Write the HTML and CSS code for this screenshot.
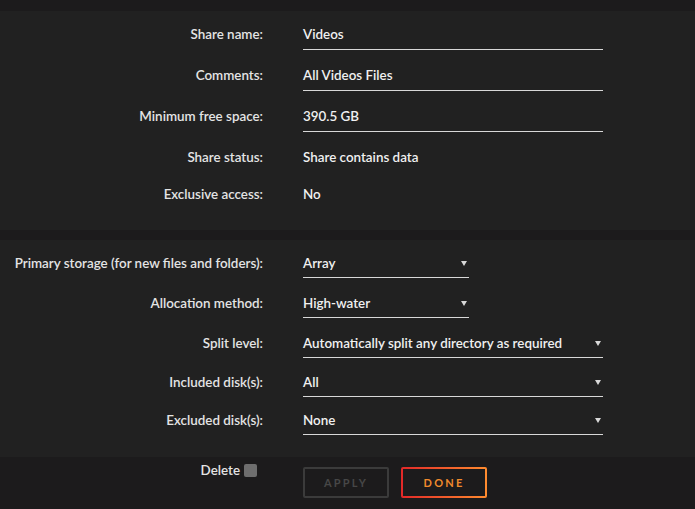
FILE: index.html
```html
<!DOCTYPE html>
<html>
<head>
<meta charset="utf-8">
<link rel="stylesheet" href="styles.css">
</head>
<body>
<div class="page">
  <section class="panel panel-top">
    <div class="row"><div class="label">Share name:</div><div class="field input">Videos</div></div>
    <div class="row"><div class="label">Comments:</div><div class="field input">All Videos Files</div></div>
    <div class="row"><div class="label">Minimum free space:</div><div class="field input">390.5 GB</div></div>
    <div class="row row-short"><div class="label">Share status:</div><div class="field">Share contains data</div></div>
    <div class="row"><div class="label">Exclusive access:</div><div class="field">No</div></div>
  </section>
  <section class="panel panel-bottom">
    <div class="row row-40"><div class="label">Primary storage (for new files and folders):</div><div class="field input select narrow">Array</div></div>
    <div class="row row-40"><div class="label">Allocation method:</div><div class="field input select narrow">High-water</div></div>
    <div class="row row-39"><div class="label">Split level:</div><div class="field input select">Automatically split any directory as required</div></div>
    <div class="row row-38"><div class="label">Included disk(s):</div><div class="field input select">All</div></div>
    <div class="row"><div class="label">Excluded disk(s):</div><div class="field input select">None</div></div>
  </section>
  <div class="actions">
    <div class="delete"><span>Delete</span><span class="checkbox"></span></div>
    <div class="buttons">
      <button class="btn btn-apply">APPLY</button>
      <button class="btn btn-done">DONE</button>
    </div>
  </div>
</div>
</body>
</html>
```
FILE: styles.css
```css
html, body {
  margin: 0;
  padding: 0;
  background: #1c1b1c;
}
body {
  font-family: Lato, "Liberation Sans", sans-serif;
  font-size: 13.4px;
  font-weight: 600;
  color: #e4e4e4;
}
.page {
  width: 695px;
  height: 509px;
  padding-top: 11px;
  box-sizing: border-box;
}
.panel {
  background: #212121;
  display: flex;
  flex-direction: column;
}
.panel-top {
  height: 219px;
  padding-top: 10px;
  gap: 12px;
  box-sizing: border-box;
}
.panel-bottom {
  margin-top: 10px;
  height: 217px;
  padding-top: 10px;
  box-sizing: border-box;
}
.row {
  display: grid;
  grid-template-columns: 263px 300px;
  column-gap: 40px;
  height: 29px;
  flex: none;
  align-items: start;
}
.row-short {
  height: 25px;
}
.row-40 {
  height: 40px;
}
.row-39 {
  height: 39px;
}
.row-38 {
  height: 38px;
}
.label {
  text-align: right;
  line-height: 18px;
  padding-top: 4px;
  white-space: nowrap;
}
.field {
  line-height: 18px;
  padding-top: 4px;
  color: #f0f0f0;
  white-space: nowrap;
}
.input {
  padding-bottom: 6px;
  border-bottom: 1px solid #d8d8d8;
}
.panel-bottom .input {
  padding-bottom: 5px;
}
.select {
  position: relative;
  padding-right: 12px;
}
.select::after {
  content: "";
  position: absolute;
  right: 2px;
  top: 11px;
  border-left: 3px solid transparent;
  border-right: 3px solid transparent;
  border-top: 5px solid #d8d8d8;
}
.narrow {
  width: 166px;
  box-sizing: border-box;
}
.actions {
  display: grid;
  grid-template-columns: 257px auto;
  column-gap: 46px;
  padding-top: 10px;
}
.delete {
  display: flex;
  justify-content: flex-end;
  align-items: center;
  gap: 4px;
  height: 14px;
  margin-top: -4px;
}
.checkbox {
  width: 13px;
  height: 13px;
  background: #6e6e6e;
  border-radius: 2px;
}
.buttons {
  display: flex;
  gap: 12px;
}
.btn {
  width: 86px;
  height: 31px;
  box-sizing: border-box;
  background: transparent;
  font-family: Lato, "Liberation Sans", sans-serif;
  font-size: 11px;
  font-weight: 700;
  letter-spacing: 2.2px;
  padding: 0;
  border-radius: 2px;
}
.btn-apply {
  border: 2px solid #3b3b3b;
  color: #474747;
}
.btn-done {
  border: 2px solid transparent;
  background: linear-gradient(#1c1b1c, #1c1b1c) padding-box, linear-gradient(90deg, #e22828, #ff8c2f) border-box;
  color: #f08a2c;
}
```
